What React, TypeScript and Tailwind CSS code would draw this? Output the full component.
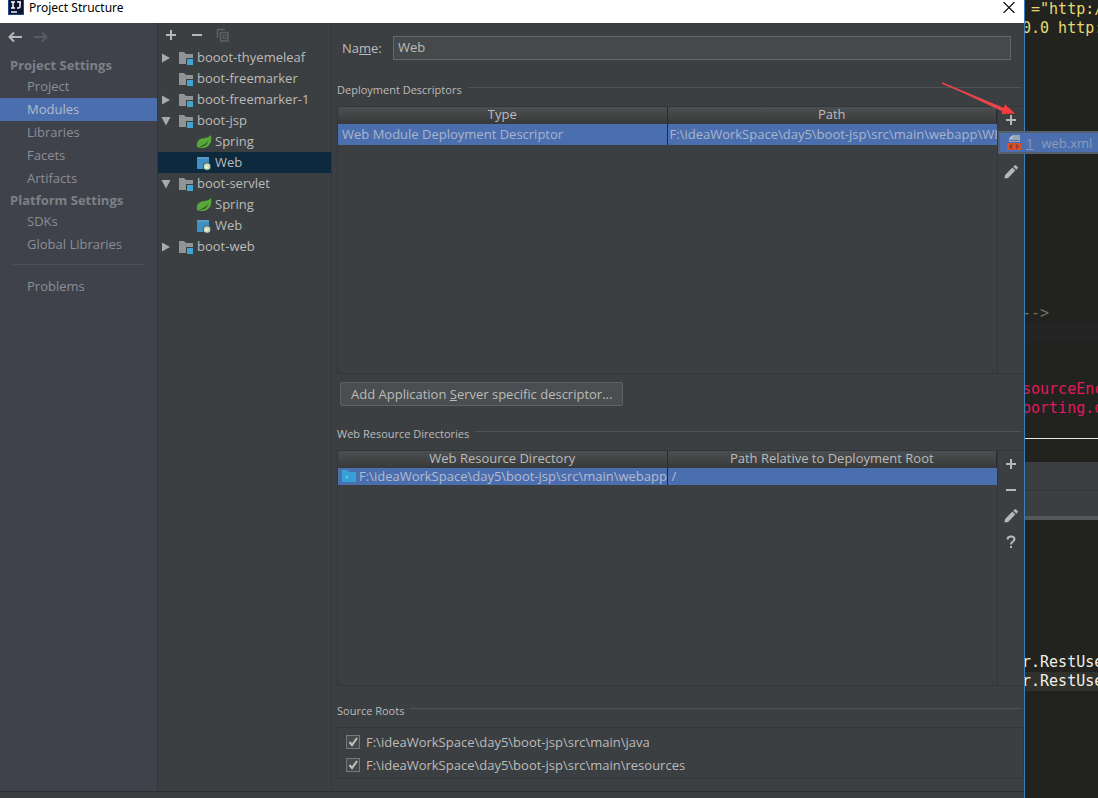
import { ReactNode } from "react";

type TreeItem = {
  name: string;
  kind: "module" | "spring" | "web";
  arrow?: "open" | "closed";
  selected?: boolean;
};

type CodeLine = { text?: string; className?: string };

const treeItems: TreeItem[] = [
  { name: "booot-thyemeleaf", kind: "module", arrow: "closed" },
  { name: "boot-freemarker", kind: "module" },
  { name: "boot-freemarker-1", kind: "module", arrow: "closed" },
  { name: "boot-jsp", kind: "module", arrow: "open" },
  { name: "Spring", kind: "spring" },
  { name: "Web", kind: "web", selected: true },
  { name: "boot-servlet", kind: "module", arrow: "open" },
  { name: "Spring", kind: "spring" },
  { name: "Web", kind: "web" },
  { name: "boot-web", kind: "module", arrow: "closed" },
];

const blank = (count: number): CodeLine[] => Array.from({ length: count }, () => ({}));

const topCode: CodeLine[] = [
  { text: ' ="http:/', className: "text-[#e6db74]" },
  { text: "0.0 http:", className: "text-[#e6db74]" },
  ...blank(14),
  { text: "-->", className: "text-[#75715e]" },
  { className: "bg-[#242424]" },
  ...blank(2),
  { text: "sourceEnc", className: "text-[#e0195f]" },
  { text: "porting.o", className: "text-[#e0195f]" },
];

const bottomCode: CodeLine[] = [
  ...blank(7),
  { text: "r.RestUse", className: "text-[#f0f0ea]" },
  { text: "r.RestUse", className: "text-[#f0f0ea] bg-[#30312a]" },
];

function IdeaLogo() {
  return (
    <svg width="16" height="15" viewBox="0 0 16 15">
      <rect width="16" height="15" fill="#0b1430" />
      <path d="M0 0h1v15H0zM15 0h1v15h-1zM0 14h16v1H0z" fill="#1b4a92" />
      <path d="M3 2h4M5 2v6M3 8h4M9 2h4M12 2v4.500q0 1.500-1.500 1.500H9" fill="none" stroke="#fff" strokeWidth="1.500" />
      <path d="M3 12h6" stroke="#fff" strokeWidth="1.400" />
    </svg>
  );
}

function ModuleIcon() {
  return (
    <svg width="16" height="16" viewBox="0 0 16 16">
      <path d="M1 2h5l2 2h7v10H1z" fill="#8f9497" />
      <path d="M8 8h8v8H8z" fill="#3c3f41" />
      <path d="M9 9h6v6H9z" fill="#40a5d2" />
    </svg>
  );
}

function SpringIcon() {
  return (
    <svg width="16" height="16" viewBox="0 0 16 16">
      <path d="M15 1c.8 5 .3 9-3.500 11.500C8.500 14.500 4 14.500 1 13 .2 8.500 2 5.500 6 4.500c4-.8 7-1 9-3.500z" fill="#57a83a" />
      <path d="M3 12.500c4-.8 7-2.500 9.500-6-1.500 4.500-5 7-9.500 6z" fill="#2d4a27" />
    </svg>
  );
}

function WebIcon() {
  return (
    <svg width="16" height="16" viewBox="0 0 16 16">
      <path d="M1 2h12v12H1z" fill="#3e8fc4" />
      <path d="M1 2h12v2H1z" fill="#5a9cc6" />
      <circle cx="11" cy="11.500" r="4" fill="#3f5258" />
      <circle cx="11" cy="11.500" r="3.200" fill="#c9dcb4" />
      <circle cx="10.500" cy="12" r="1.300" fill="#eef3dc" />
    </svg>
  );
}

function TreeArrow({ arrow }: { arrow?: "open" | "closed" }) {
  return (
    <svg width="10" height="10" viewBox="0 0 10 10" fill="#a8abad">
      {arrow === "closed" && <path d="M1 .5v9L9 5z" />}
      {arrow === "open" && <path d="M.5 1h9L5 9.500z" />}
    </svg>
  );
}

function PlusIcon() {
  return (
    <svg width="12" height="12" viewBox="0 0 12 12" stroke="#b4b8ba" strokeWidth="2">
      <path d="M6 1v10M1 6h10" />
    </svg>
  );
}

function MinusIcon() {
  return (
    <svg width="12" height="12" viewBox="0 0 12 12" stroke="#b4b8ba" strokeWidth="2">
      <path d="M1 6h10" />
    </svg>
  );
}

function PencilIcon() {
  return (
    <svg width="16" height="16" viewBox="0 0 16 16" fill="#b4b8ba">
      <path d="M1.500 14.500l.6-3.600 7.300-7.300 3 3-7.300 7.300zM10.300 2.700l1.300-1.300q.7-.6 1.400 0l1.600 1.600q.6.7 0 1.400l-1.300 1.300z" />
    </svg>
  );
}

function HelpIcon() {
  return (
    <svg width="10" height="14" viewBox="0 0 10 14" fill="none" stroke="#b4b8ba" strokeWidth="2">
      <path d="M1.500 4.500C1.500 2.500 3 1.500 5 1.500s3.500 1 3.500 2.800C8.500 6.500 5 6.500 5 9.500M5 11v2" />
    </svg>
  );
}

function CopyIcon() {
  return (
    <svg width="14" height="14" viewBox="0 0 14 14" fill="none" stroke="#5e6163" strokeWidth="1.500">
      <path d="M1.500 10V1.500H9M4.500 4.500h7.500v8.500H4.500z" />
      <path d="M7 7h3v3.500H7z" strokeWidth="1" />
    </svg>
  );
}

function NavArrow({ className, flip }: { className: string; flip?: boolean }) {
  return (
    <svg width="14" height="12" viewBox="0 0 14 12" fill="none" stroke="currentColor" strokeWidth="2" className={className}>
      <path d={flip ? "M0 6h12M8 1.500L12.500 6 8 10.500" : "M14 6H2M6 1.500L1.500 6 6 10.500"} />
    </svg>
  );
}

function XmlIcon() {
  return (
    <svg width="16" height="16" viewBox="0 0 16 16">
      <path d="M7 0h7v7H3V4z" fill="#9aa7b5" />
      <path d="M3 3.500L6.500 0v3.500z" fill="#c2cad2" />
      <path d="M4 5.500h9" stroke="#4b6eaf" />
      <path d="M1 8h14v7H1z" fill="#d5502c" />
      <path d="M6 9.500L4 11.500l2 2M10 9.500l2 2-2 2" fill="none" stroke="#7a3a2c" strokeWidth="1.300" />
    </svg>
  );
}

function ToolButton({ label, children }: { label: string; children: ReactNode }) {
  return (
    <button type="button" aria-label={label} className="flex h-[26px] w-[26px] items-center justify-center">
      {children}
    </button>
  );
}

function NavItem({ label, active }: { label: string; active?: boolean }) {
  return (
    <a
      href="#"
      className={`flex h-[23px] items-center pb-px pl-[27px] ${active ? "bg-[#4b6eaf] text-[#b4bccb]" : "text-[#8b8e94]"}`}
    >
      {label}
    </a>
  );
}

function NavHeading({ children }: { children: ReactNode }) {
  return <h2 className="flex h-5 items-center pb-px pl-[10px] font-bold text-[#7d8086]">{children}</h2>;
}

function SectionTitle({ children }: { children: ReactNode }) {
  return (
    <div className="mb-1.5 flex h-5 items-center gap-1.5 pr-[3px]">
      <h3 className="text-[11px]">{children}</h3>
      <div className="mb-1.5 h-px flex-1 bg-[#515456]" />
    </div>
  );
}

function HeaderCell({ children }: { children: ReactNode }) {
  return (
    <th className="h-[17px] border-r border-[#2b2b2b] bg-linear-to-b from-[#4c4f51] to-[#383939] px-0 pt-0 pb-0.5 text-center leading-[15px] font-normal">
      {children}
    </th>
  );
}

function Sidebar() {
  return (
    <nav className="w-[157px] shrink-0 bg-[#3f424b]">
      <div className="flex h-8 items-start gap-3 pt-2 pl-2">
        <button type="button" aria-label="Back">
          <NavArrow className="text-[#b4b8ba]" />
        </button>
        <button type="button" aria-label="Forward">
          <NavArrow flip className="text-[#585b61]" />
        </button>
      </div>
      <NavHeading>Project Settings</NavHeading>
      <NavItem label="Project" />
      <NavItem label="Modules" active />
      <NavItem label="Libraries" />
      <NavItem label="Facets" />
      <NavItem label="Artifacts" />
      <NavHeading>Platform Settings</NavHeading>
      <NavItem label="SDKs" />
      <NavItem label="Global Libraries" />
      <hr className="mx-3 mt-2 mb-[10px] border-[#4c4f57]" />
      <NavItem label="Problems" />
    </nav>
  );
}

function ModuleTree() {
  return (
    <div className="w-[174px] shrink-0 border-l border-[#35383a]">
      <div className="flex h-6 items-center">
        <ToolButton label="Add module">
          <PlusIcon />
        </ToolButton>
        <ToolButton label="Remove module">
          <MinusIcon />
        </ToolButton>
        <ToolButton label="Copy module">
          <CopyIcon />
        </ToolButton>
      </div>
      <ul>
        {treeItems.map((item, i) => (
          <li
            key={i}
            className={`flex h-[21px] items-center pl-[3px] text-[#bbbbbb] ${item.selected ? "bg-[#0d293e]" : ""}`}
          >
            <TreeArrow arrow={item.arrow} />
            <span className={item.kind === "module" ? "mr-[3px] ml-[7px]" : "mr-[3px] ml-[25px]"}>
              {item.kind === "module" && <ModuleIcon />}
              {item.kind === "spring" && <SpringIcon />}
              {item.kind === "web" && <WebIcon />}
            </span>
            <span className="pb-px">{item.name}</span>
          </li>
        ))}
      </ul>
    </div>
  );
}

function AddMenu() {
  return (
    <div className="absolute top-[24px] left-0 z-10 w-32 border-2 border-[#55606c] bg-[#4b6eaf]">
      <button type="button" className="flex h-[19px] w-full items-center pl-1.5 text-[#8b9cba]">
        <XmlIcon />
        <span className="ml-1 underline">1</span>
        <span className="ml-2">web.xml</span>
      </button>
    </div>
  );
}

function PointerArrow() {
  return (
    <svg width="76" height="34" viewBox="0 0 76 34" className="pointer-events-none absolute -top-[25px] right-[8px] z-20">
      <path d="M2 1L64 26l-1.500 3.500z" fill="#e8464a" />
      <path d="M2 1L64 27" stroke="#e8464a" strokeWidth="1.500" />
      <path d="M65 22.500L75 31.500l-13.500.5z" fill="#ff3b3b" />
    </svg>
  );
}

function DescriptorsPanel() {
  return (
    <div className="flex h-[268px] border-y border-l border-[#333638]">
      <div className="min-w-0 flex-1">
        <table className="w-full table-fixed border-separate border-spacing-0">
          <thead>
            <tr>
              <HeaderCell>Type</HeaderCell>
              <HeaderCell>Path</HeaderCell>
            </tr>
          </thead>
          <tbody>
            <tr className="bg-[#4b6eaf] text-[#a9b5cb]">
              <td className="h-[21px] truncate border-r border-[#2b2b2b] px-1 pt-0 pb-px">Web Module Deployment Descriptor</td>
              <td className="h-[21px] overflow-hidden pt-0 pb-px pl-0.5 whitespace-nowrap">
                F:\ideaWorkSpace\day5\boot-jsp\src\main\webapp\WE
              </td>
            </tr>
          </tbody>
        </table>
      </div>
      <div className="relative w-[27px] shrink-0 border-l border-[#333638]">
        <ToolButton label="Add descriptor">
          <PlusIcon />
        </ToolButton>
        <ToolButton label="Remove descriptor">
          <MinusIcon />
        </ToolButton>
        <ToolButton label="Edit descriptor">
          <PencilIcon />
        </ToolButton>
        <AddMenu />
        <PointerArrow />
      </div>
    </div>
  );
}

function ResourcesPanel() {
  return (
    <div className="flex min-h-[236px] flex-1 border-y border-l border-[#333638]">
      <div className="min-w-0 flex-1">
        <table className="w-full table-fixed border-separate border-spacing-0">
          <thead>
            <tr>
              <HeaderCell>Web Resource Directory</HeaderCell>
              <HeaderCell>Path Relative to Deployment Root</HeaderCell>
            </tr>
          </thead>
          <tbody>
            <tr className="bg-[#4b6eaf] leading-4 text-[#b4bccb]">
              <td className="h-[17px] border-r border-[#2b2b2b] pt-0 pr-0 pb-px pl-[3px] whitespace-nowrap">
                <div className="flex items-center gap-0.5">
                  <svg width="16" height="14" viewBox="0 0 16 14" className="shrink-0">
                    <path d="M1 1h5l2 2h7v10H1z" fill="#38a0d6" />
                    <circle cx="6" cy="8" r="1.500" fill="#52c4e8" />
                  </svg>
                  F:\ideaWorkSpace\day5\boot-jsp\src\main\webapp
                </div>
              </td>
              <td className="h-[17px] pt-0 pb-px pl-1">/</td>
            </tr>
          </tbody>
        </table>
      </div>
      <div className="w-[27px] shrink-0 border-l border-[#333638]">
        <ToolButton label="Add directory">
          <PlusIcon />
        </ToolButton>
        <ToolButton label="Remove directory">
          <MinusIcon />
        </ToolButton>
        <ToolButton label="Edit directory">
          <PencilIcon />
        </ToolButton>
        <ToolButton label="Help">
          <HelpIcon />
        </ToolButton>
      </div>
    </div>
  );
}

function SourceRoot({ path }: { path: string }) {
  return (
    <label className="flex h-[23px] items-center gap-1.5">
      <span className="grid size-[14px]">
        <input
          type="checkbox"
          defaultChecked
          className="peer col-start-1 row-start-1 size-[14px] appearance-none border border-[#76797b] bg-[#45494a]"
        />
        <svg viewBox="0 0 14 14" className="pointer-events-none invisible col-start-1 row-start-1 size-[14px] peer-checked:visible">
          <path d="M3.500 7l2.500 3 5-7" fill="none" stroke="#c0c3c4" strokeWidth="2" />
        </svg>
      </span>
      {path}
    </label>
  );
}

function CodeLines({ lines }: { lines: CodeLine[] }) {
  return (
    <>
      {lines.map((line, i) => (
        <pre
          key={i}
          className={`h-[19px] pl-px font-['DejaVu_Sans_Mono',monospace] text-[15px] leading-[19px] ${line.className ?? ""}`}
        >
          {line.text}
        </pre>
      ))}
    </>
  );
}

function Editor() {
  return (
    <aside className="flex w-[73px] shrink-0 flex-col overflow-hidden bg-[#22231e]">
      <div className="-ml-1">
        <CodeLines lines={topCode} />
      </div>
      <div className="mt-5 h-px bg-[#e8e8e4]" />
      <div className="mt-[23px] h-7 bg-[#3c3f41]" />
      <div className="h-[26px] border-t border-[#333638] bg-[#3c3f41]" />
      <div className="h-1 bg-[#55585a]" />
      <div className="-ml-1">
        <CodeLines lines={bottomCode} />
      </div>
    </aside>
  );
}

export default function App() {
  return (
    <div className="flex min-h-screen overflow-hidden bg-[#22231e] font-['Open_Sans',sans-serif] text-[13px] leading-5 text-[#bbbbbb]">
      <div className="flex min-w-0 flex-1 flex-col border-r border-[#3a80bd] bg-[#3c3f41]">
        <header className="flex h-[23px] shrink-0 items-start justify-between bg-white pr-[9px] pl-2 font-['Noto_Sans',sans-serif] text-xs text-black">
          <div className="flex items-start gap-[5px]">
            <IdeaLogo />
            <h1 className="leading-4">Project Structure</h1>
          </div>
          <button type="button" aria-label="Close" className="pt-0.5">
            <svg width="12" height="11" viewBox="0 0 12 11" stroke="#000" strokeWidth="1.100">
              <path d="M.5 0l11 11M11.500 0L.5 11" />
            </svg>
          </button>
        </header>
        <div className="flex flex-1">
          <Sidebar />
          <ModuleTree />
          <main className="flex min-w-0 flex-1 flex-col border-l border-[#333638] pt-[13px] pb-3 pl-[5px]">
            <div className="mb-5 flex h-6 items-center pr-[13px] pl-[5px]">
              <label htmlFor="facet-name" className="w-[51px]">
                Na<span className="underline">m</span>e:
              </label>
              <input
                id="facet-name"
                defaultValue="Web"
                className="h-6 min-w-0 flex-1 border border-[#646667] bg-[#45494a] px-1 pb-0.5 outline-none"
              />
            </div>
            <SectionTitle>Deployment Descriptors</SectionTitle>
            <DescriptorsPanel />
            <button
              type="button"
              className="mt-2 mb-[18px] ml-[3px] h-6 self-start rounded-xs border border-[#5e6162] bg-[#4a4e50] px-[10px] leading-5"
            >
              Add Application <span className="underline">S</span>erver specific descriptor...
            </button>
            <SectionTitle>Web Resource Directories</SectionTitle>
            <ResourcesPanel />
            <div className="h-[15px]" />
            <SectionTitle>Source Roots</SectionTitle>
            <div className="border border-[#333638] px-2 py-0.5">
              <SourceRoot path="F:\ideaWorkSpace\day5\boot-jsp\src\main\java" />
              <SourceRoot path="F:\ideaWorkSpace\day5\boot-jsp\src\main\resources" />
            </div>
          </main>
        </div>
        <footer className="h-[7px] shrink-0 border-t border-[#2e3133]" />
      </div>
      <Editor />
    </div>
  );
}
